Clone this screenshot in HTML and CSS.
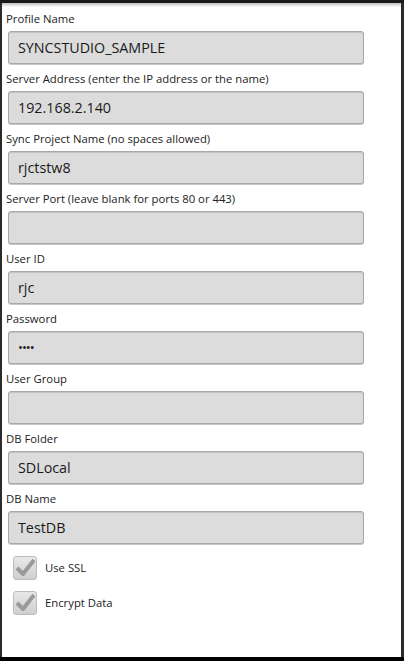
FILE: index.html
```html
<!DOCTYPE html>
<html>
<head>
<meta charset="utf-8">
<link rel="stylesheet" href="styles.css">
</head>
<body>
<div class="screen">
  <div class="form">
    <div class="field"><div class="label">Profile Name</div><div class="input">SYNCSTUDIO_SAMPLE</div></div>
    <div class="field"><div class="label">Server Address (enter the IP address or the name)</div><div class="input">192.168.2.140</div></div>
    <div class="field"><div class="label">Sync Project Name (no spaces allowed)</div><div class="input">rjctstw8</div></div>
    <div class="field"><div class="label">Server Port (leave blank for ports 80 or 443)</div><div class="input"></div></div>
    <div class="field"><div class="label">User ID</div><div class="input">rjc</div></div>
    <div class="field"><div class="label">Password</div><div class="input pw">&bull;&bull;&bull;&bull;</div></div>
    <div class="field"><div class="label">User Group</div><div class="input"></div></div>
    <div class="field"><div class="label">DB Folder</div><div class="input">SDLocal</div></div>
    <div class="field"><div class="label">DB Name</div><div class="input">TestDB</div></div>
    <div class="check"><span class="box"><svg width="22" height="22" viewBox="0 0 22 22"><path d="M3 11 L9 17 L20 3" fill="none" stroke="#9a9a9a" stroke-width="4" stroke-linejoin="round"/></svg></span><span class="ctext">Use SSL</span></div>
    <div class="check"><span class="box"><svg width="22" height="22" viewBox="0 0 22 22"><path d="M3 11 L9 17 L20 3" fill="none" stroke="#9a9a9a" stroke-width="4" stroke-linejoin="round"/></svg></span><span class="ctext">Encrypt Data</span></div>
  </div>
</div>
</body>
</html>
```
FILE: styles.css
```css
html, body { margin: 0; padding: 0; background: #000; }
body { width: 404px; height: 661px; overflow: hidden; font-family: "Open Sans", "DejaVu Sans", sans-serif; }
.screen {
  box-sizing: border-box;
  width: 404px; height: 661px;
  background: #2b2b2b;
  border-top: 3px solid #1a1a1a;
  border-bottom: 4px solid #000;
  padding: 0 3px 0 2px;
}
.form {
  background: #fff;
  height: 100%;
  box-sizing: border-box;
  padding: 7px 0 0 4px;
  box-shadow: inset 0 4px 3px -2px rgba(0,0,0,0.25);
}
.field { height: 60px; }
.label { font-size: 11.3px; color: #222; height: 21px; line-height: 18px; }
.input {
  box-sizing: border-box;
  margin-left: 2px;
  width: 356px; height: 33px;
  background: #dcdcdc;
  border: 1px solid #a8a8a8;
  border-radius: 3px;
  box-shadow: inset 0 1px 1px rgba(0,0,0,0.12), 0 1px 0 #c8c8c8;
  font-size: 14.3px; color: #1a1a1a;
  padding-left: 9px; line-height: 31px;
}
.pw { font-size: 13px; letter-spacing: -1px; }
.check { display: flex; align-items: center; height: 35px; padding-left: 7px; }
.box {
  width: 22px; height: 22px; border-radius: 3px;
  background: linear-gradient(#e8e8e8, #cfcfcf);
  border: 1px solid #bcbcbc;
  display: flex; align-items: center; justify-content: center;
  margin-right: 8px;
}
.ctext { font-size: 11.3px; color: #222; }
```
